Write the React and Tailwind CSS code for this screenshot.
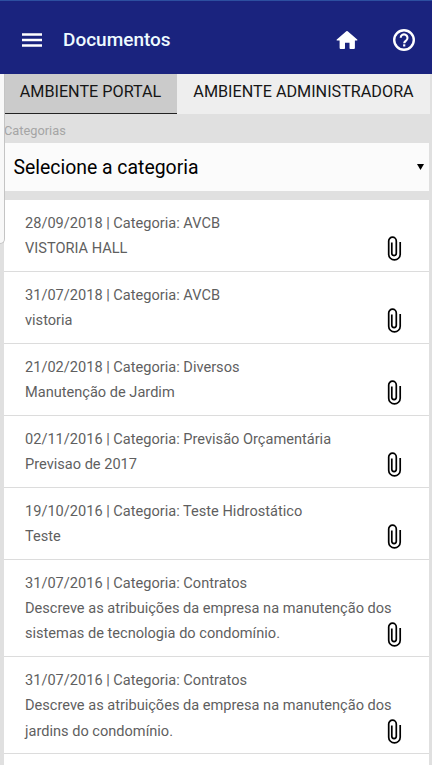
const documents = [
  { date: "28/09/2018", category: "AVCB", lines: ["VISTORIA HALL"] },
  { date: "31/07/2018", category: "AVCB", lines: ["vistoria"] },
  { date: "21/02/2018", category: "Diversos", lines: ["Manutenção de Jardim"] },
  { date: "02/11/2016", category: "Previsão Orçamentária", lines: ["Previsao de 2017"] },
  { date: "19/10/2016", category: "Teste Hidrostático", lines: ["Teste"] },
  {
    date: "31/07/2016",
    category: "Contratos",
    lines: [
      "Descreve as atribuições da empresa na manutenção dos",
      "sistemas de tecnologia do condomínio.",
    ],
  },
  {
    date: "31/07/2016",
    category: "Contratos",
    lines: [
      "Descreve as atribuições da empresa na manutenção dos",
      "jardins do condomínio.",
    ],
  },
];

function MenuIcon() {
  return (
    <svg width="20" height="14" viewBox="0 0 20 14" fill="none" stroke="#fff" strokeWidth="2.5">
      <path d="M0 1.6h20M0 7h20M0 12.4h20" />
    </svg>
  );
}

function HomeIcon() {
  return (
    <svg width="22" height="20" viewBox="0 0 22 20" fill="#fff">
      <path d="M10.3 1.3a1 1 0 0 1 1.4 0l9.5 8.1c.4.4.2 1-.4 1h-1.9v7.3c0 .8-.5 1.3-1.3 1.3h-3.3c-.5 0-.8-.3-.8-.8v-5.4H9v5.4c0 .5-.3.8-.8.8H4.9c-.8 0-1.3-.5-1.3-1.3v-7.3H1.2c-.6 0-.8-.6-.4-1z" />
    </svg>
  );
}

function HelpIcon() {
  return (
    <svg width="24" height="24" viewBox="0 0 24 24" fill="none" stroke="#fff">
      <circle cx="12" cy="12" r="9.8" strokeWidth="2.4" />
      <path d="M8.7 9.8a3.4 3.4 0 1 1 5.7 2.5c-1.3 1.1-2.2 1.5-2.2 3" strokeWidth="2.1" />
      <path d="M11.1 17.4h2.2" strokeWidth="2.2" />
    </svg>
  );
}

function ClipIcon() {
  return (
    <svg
      className="-mb-px shrink-0"
      width="16"
      height="26"
      viewBox="0 0 16 26"
      fill="none"
      stroke="#000"
      strokeWidth="1.7"
    >
      <path d="M14.2 6v12.2a5.75 5.75 0 0 1-11.5 0V5a3.8 3.8 0 0 1 7.6 0v12.3a2.25 2.25 0 0 1-4.5 0V6.5" />
    </svg>
  );
}

function DocumentRow({ date, category, lines }) {
  return (
    <li className="flex items-end border-b border-[#dcdcdc] pt-[11px] pb-[9.6px] pl-[21px] text-[14.58px] leading-[25.2px] text-[#5f5f5f]">
      <div className="w-[361px] whitespace-nowrap">
        <p>
          {date} | Categoria: {category}
        </p>
        {lines.map((line) => (
          <p key={line}>{line}</p>
        ))}
      </div>
      <ClipIcon />
    </li>
  );
}

export default function App() {
  return (
    <div className="relative flex h-[765px] w-[432px] flex-col overflow-hidden bg-[#e0e0e0] font-['Roboto',sans-serif]">
      <header className="flex h-[74px] shrink-0 items-center border-t border-[#2d4fa0] bg-[#1a237e] pt-[5px] pl-[22px]">
        <MenuIcon />
        <h1 className="ml-[21px] flex-1 text-[19px] font-medium text-[#eefaff]">Documentos</h1>
        <div className="flex items-center gap-[34px] pr-4">
          <HomeIcon />
          <HelpIcon />
        </div>
      </header>

      <nav className="mr-[2px] ml-1 flex h-10 shrink-0 text-[16.2px] whitespace-nowrap text-[#161616]">
        <button type="button" className="w-[173px] border-b border-[#222] bg-[#cbcbcb] pb-[3px]">
          AMBIENTE PORTAL
        </button>
        <button type="button" className="flex-1 bg-[#eee] pb-1">
          AMBIENTE ADMINISTRADORA
        </button>
      </nav>

      <main className="mr-[3px] ml-1 flex flex-col">
        <p className="h-[29px] pt-2 text-[12.8px] leading-[18px] text-[#a5a5a5]">Categorias</p>
        <div className="mb-[9px] flex h-12 items-center justify-between bg-[#fbfbfb] pr-[5px] pl-[9.5px]">
          <span className="pt-px text-[19.4px] text-black">Selecione a categoria</span>
          <svg width="7" height="6" viewBox="0 0 7 6">
            <path d="M0 0h7L3.5 6z" />
          </svg>
        </div>
        <ul className="bg-white pb-6">
          {documents.map((doc, i) => (
            <DocumentRow key={i} {...doc} />
          ))}
        </ul>
      </main>

      {/* edge of the closed side drawer */}
      <div className="absolute top-[74px] left-0 h-[170px] w-[5px] rounded-br-[5px] border-r border-b border-[#c4c4c4] bg-[#f8f8f8]" />
    </div>
  );
}
